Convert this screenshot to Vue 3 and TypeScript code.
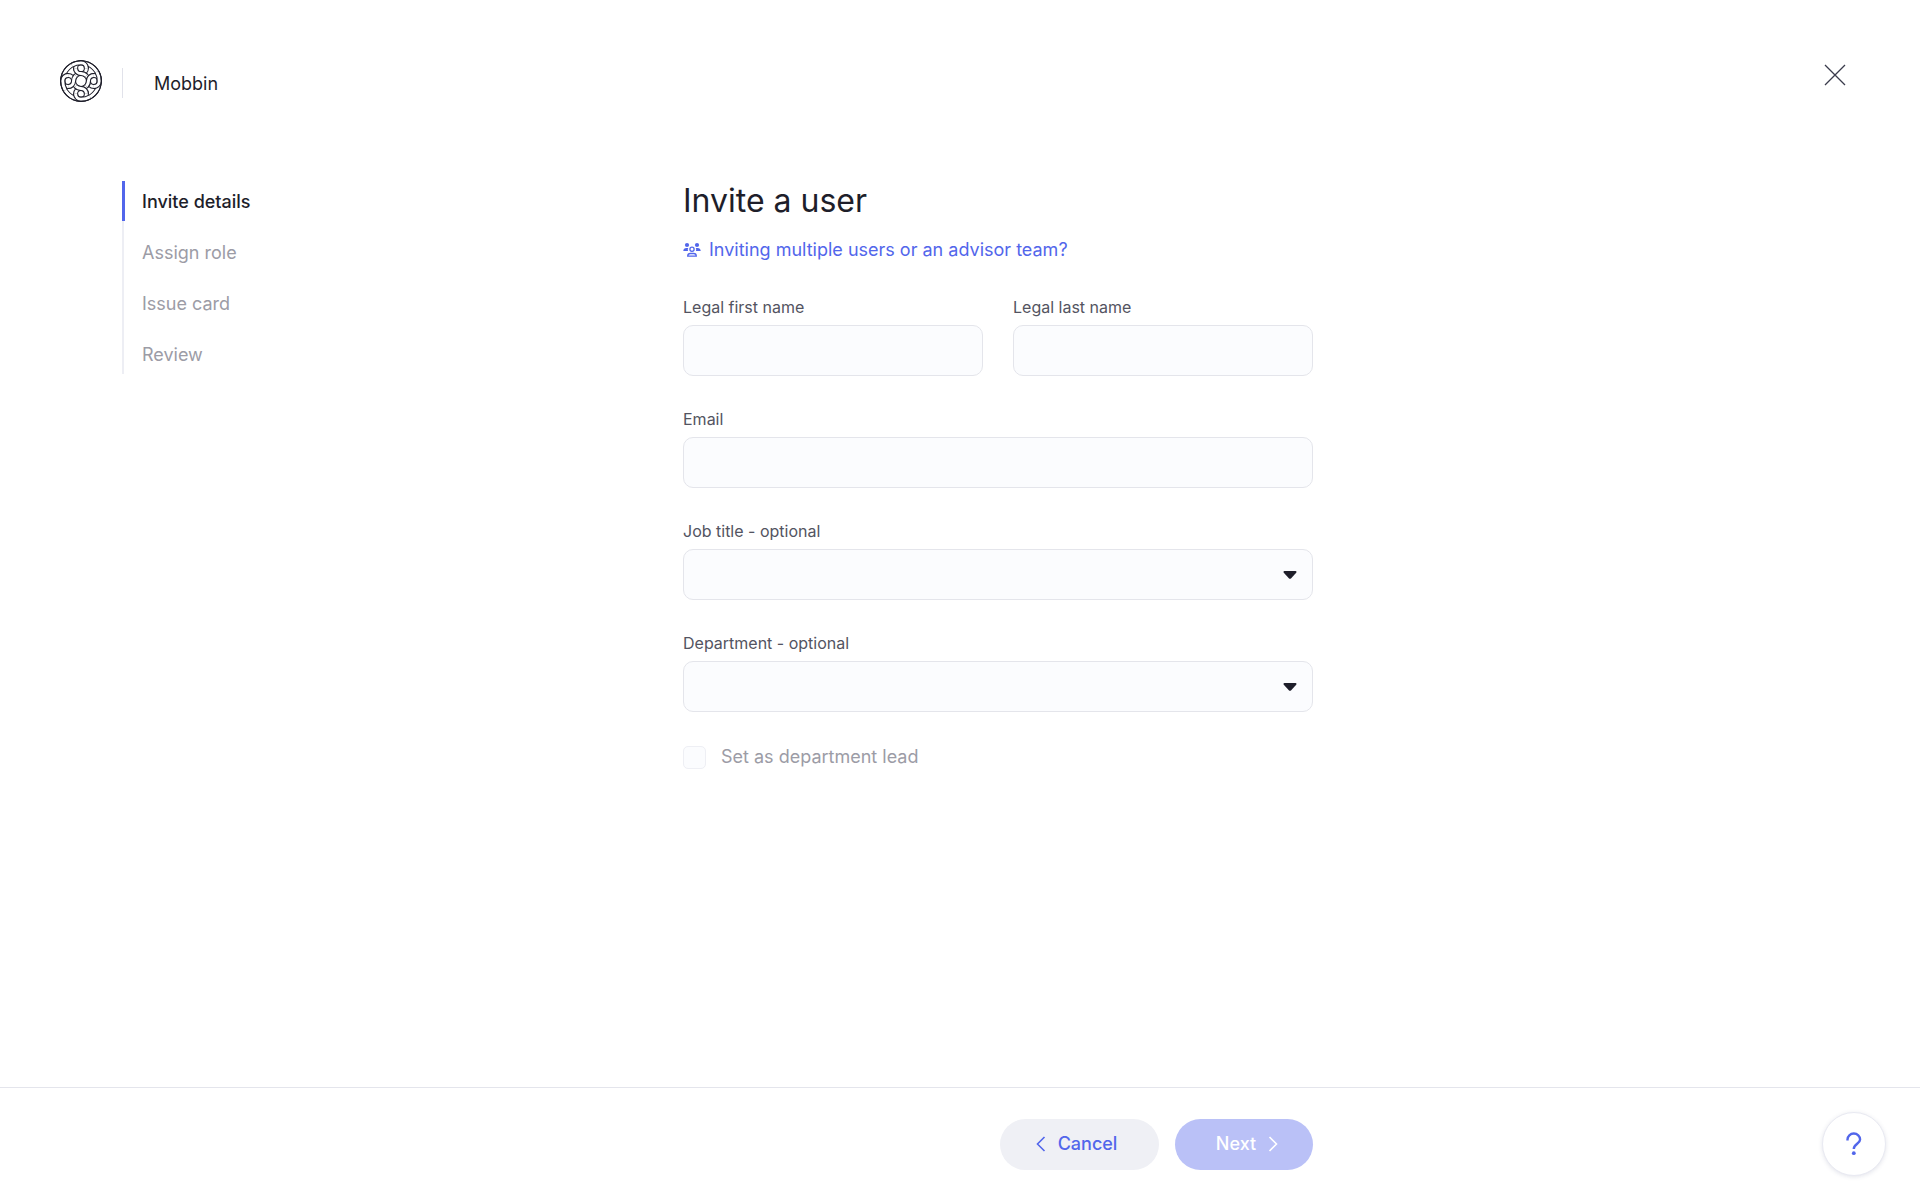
<script setup lang="ts">
import { ref } from 'vue'

const steps: string[] = ['Invite details', 'Assign role', 'Issue card', 'Review']
const current = ref(0)
const quarters: number[] = [0, 90, 180, 270]

const firstName = ref('')
const lastName = ref('')
const email = ref('')
const jobTitle = ref('')
const department = ref('')
const lead = ref(false)
</script>

<template>
  <div class="page">
    <header class="top">
      <div class="brand">
        <svg class="logo" viewBox="-62 -62 124 124" aria-hidden="true">
          <g v-for="q in quarters" :key="'s' + q" :transform="`rotate(${q})`">
            <path class="edge" d="M-54 0A54 54 0 0 1 0 -54A16 16 0 0 1 0 -22A22 22 0 0 0 -22 0A16 16 0 0 1 -54 0Z" />
            <path class="band" d="M-54 0A54 54 0 0 1 0 -54A16 16 0 0 1 0 -22A22 22 0 0 0 -22 0A16 16 0 0 1 -54 0Z" />
          </g>
          <g v-for="q in quarters" :key="'o' + q" :transform="`rotate(${q})`">
            <path class="edge" d="M-27 -46.800A54 54 0 0 1 0 -54A16 16 0 0 1 16 -38" />
            <path class="band" d="M-27 -46.800A54 54 0 0 1 0 -54A16 16 0 0 1 16 -38" />
            <path class="edge" d="M-16 -38A16 16 0 0 0 0 -22A22 22 0 0 1 15.600 -15.600" />
            <path class="band" d="M-16 -38A16 16 0 0 0 0 -22A22 22 0 0 1 15.600 -15.600" />
          </g>
          <circle class="rim" r="60" />
        </svg>
        <span class="company">Mobbin</span>
      </div>
      <button class="close" type="button" aria-label="Close">
        <svg viewBox="0 0 22 22" width="22" height="22" aria-hidden="true">
          <path d="M1 1L21 21M21 1L1 21" fill="none" stroke="#3a3b4c" stroke-width="1.3" />
        </svg>
      </button>
    </header>

    <div class="content">
      <nav class="rail" aria-label="Progress">
        <ol class="steps">
          <li v-for="(step, i) in steps" :key="step" :class="['step', { active: i === current }]">{{ step }}</li>
        </ol>
      </nav>

      <form id="invite" class="form" @submit.prevent>
        <h1 class="title">Invite a user</h1>
        <a class="multi" href="#">
          <svg viewBox="0 0 18 16" width="18" height="16" aria-hidden="true">
            <g fill="currentColor">
              <circle cx="4" cy="3" r="2.1" />
              <circle cx="14" cy="3" r="2.1" />
              <path d="M.3 9C.3 7.100 1.600 6 3.300 6H5.200C4.700 7 4.700 8 5 9Z" />
              <path d="M17.700 9C17.700 7.100 16.400 6 14.700 6H12.800C13.300 7 13.300 8 13 9Z" />
            </g>
            <g fill="none" stroke="currentColor" stroke-width="1.3">
              <circle cx="9" cy="7.300" r="2.100" />
              <path d="M4.700 14.200C4.700 12.400 5.800 11.500 7.300 11.500H10.700C12.200 11.500 13.300 12.400 13.300 14.200Z" />
            </g>
          </svg>
          <span>Inviting multiple users or an advisor team?</span>
        </a>

        <div class="pair">
          <div class="field">
            <label for="first">Legal first name</label>
            <input id="first" v-model="firstName" class="box" type="text" />
          </div>
          <div class="field">
            <label for="last">Legal last name</label>
            <input id="last" v-model="lastName" class="box" type="text" />
          </div>
        </div>
        <div class="field">
          <label for="email">Email</label>
          <input id="email" v-model="email" class="box" type="email" />
        </div>
        <div class="field">
          <label for="job">Job title - optional</label>
          <div class="picker">
            <select id="job" v-model="jobTitle" class="box"><option value=""></option></select>
            <svg class="caret" viewBox="0 0 14 8" width="14" height="8" aria-hidden="true">
              <path d="M1.500 0H12.500Q14 .3 13.200 1.700L8.200 7.200Q7 8.300 5.800 7.200L.8 1.700Q0 .3 1.500 0Z" />
            </svg>
          </div>
        </div>
        <div class="field">
          <label for="dept">Department - optional</label>
          <div class="picker">
            <select id="dept" v-model="department" class="box"><option value=""></option></select>
            <svg class="caret" viewBox="0 0 14 8" width="14" height="8" aria-hidden="true">
              <path d="M1.500 0H12.500Q14 .3 13.200 1.700L8.200 7.200Q7 8.300 5.800 7.200L.8 1.700Q0 .3 1.500 0Z" />
            </svg>
          </div>
        </div>
        <div class="check">
          <input id="lead" v-model="lead" type="checkbox" disabled />
          <label for="lead">Set as department lead</label>
        </div>
      </form>
    </div>

    <footer class="bottom">
      <div class="actions">
        <button class="btn cancel" type="button">
          <svg viewBox="0 0 10 16" width="10" height="16" aria-hidden="true"><path d="M8.500 1L1.500 8L8.500 15" /></svg>
          Cancel
        </button>
        <button class="btn next" type="submit" form="invite" disabled>
          Next
          <svg viewBox="0 0 10 16" width="10" height="16" aria-hidden="true"><path d="M1.500 1L8.500 8L1.500 15" /></svg>
        </button>
      </div>
      <button class="help" type="button" aria-label="Help">
        <svg viewBox="0 0 16 24" width="16" height="24" aria-hidden="true">
          <path d="M1.500 8.500V7.500A6.300 6 0 0 1 14.100 7.500C14.100 11.700 7.800 12 7.800 17" fill="none" stroke="#5266eb" stroke-width="2.400" />
          <circle cx="7.800" cy="21.200" r="1.900" fill="#5266eb" />
        </svg>
      </button>
    </footer>
  </div>
</template>

<style>
body {
  margin: 0;
  background: #fff;
}
</style>

<style scoped>
.page {
  display: flex;
  flex-direction: column;
  min-height: 100vh;
  font-family: Inter, "Liberation Sans", sans-serif;
  font-size: 18px;
  line-height: 24px;
  color: #1e1e2a;
}
button,
input,
select {
  font: inherit;
  margin: 0;
  padding: 0;
  box-sizing: border-box;
}
.top {
  display: flex;
  justify-content: space-between;
  align-items: flex-start;
  padding: 60px 74px 0 60px;
}
.brand {
  display: flex;
  align-items: flex-start;
}
.logo {
  width: 42px;
  height: 42px;
}
.edge {
  fill: none;
  stroke: #1e1e2a;
  stroke-width: 15;
}
.band {
  fill: none;
  stroke: #fff;
  stroke-width: 9;
}
.rim {
  fill: none;
  stroke: #1e1e2a;
  stroke-width: 3;
}
.company {
  margin: 8px 0 0 20px;
  padding: 4px 0 2px 31px;
  border-left: 1px solid #e1e2ea;
}
.close {
  display: flex;
  padding: 4px 0;
  border: 0;
  background: none;
}
.content {
  display: flex;
  flex: 1;
  padding: 79px 122px 60px;
}
.rail {
  width: 561px;
  flex-shrink: 0;
}
.steps {
  display: flex;
  flex-direction: column;
  gap: 11px;
  width: 240px;
  margin: 0;
  padding: 0;
  list-style: none;
  box-shadow: inset 2px 0 #edeef4;
}
.step {
  padding: 9px 0 7px 20px;
  color: #9c9ca6;
}
.step.active {
  color: #1e1e2a;
  font-weight: 500;
  box-shadow: inset 3px 0 #5266eb;
}
.form {
  display: flex;
  flex-direction: column;
  flex: 0 1 630px;
  min-width: 0;
}
.title {
  margin: 0;
  font-size: 32px;
  line-height: 40px;
  font-weight: 400;
}
.multi {
  display: flex;
  align-items: center;
  gap: 8px;
  margin: 17px 0 35px;
  color: #5266eb;
  text-decoration: none;
}
.pair {
  display: grid;
  grid-template-columns: 1fr 1fr;
  gap: 30px;
}
.field {
  display: flex;
  flex-direction: column;
  gap: 8px;
  margin-bottom: 33px;
  font-size: 16px;
  line-height: 20px;
}
.field label {
  color: #535461;
}
.box {
  display: block;
  width: 100%;
  height: 51px;
  padding: 0 16px;
  border: 1px solid #e4e5eb;
  border-radius: 10px;
  background: #fbfcfe;
  appearance: none;
}
.picker {
  position: relative;
}
.caret {
  position: absolute;
  right: 16px;
  top: 22px;
  fill: #1e1e2a;
  pointer-events: none;
}
.check {
  display: flex;
  align-items: center;
  gap: 15px;
  color: #9c9ca6;
}
.check input {
  width: 23px;
  height: 23px;
  border: 1px solid #eeeff4;
  border-radius: 5px;
  background: #fbfcfe;
  appearance: none;
}
.bottom {
  display: flex;
  justify-content: space-between;
  align-items: center;
  padding: 24px 34px 24px 683px;
  border-top: 1px solid #e4e5ec;
}
.actions {
  display: flex;
  flex: 0 1 630px;
  justify-content: flex-end;
  gap: 16px;
}
.btn {
  display: flex;
  align-items: center;
  justify-content: center;
  gap: 12px;
  height: 51px;
  border: 0;
  border-radius: 26px;
  font-weight: 500;
}
.btn path {
  fill: none;
  stroke: currentColor;
  stroke-width: 1.600;
}
.cancel {
  width: 159px;
  padding-right: 6px;
  background: #eff0f5;
  color: #5266eb;
}
.next {
  width: 138px;
  padding-left: 6px;
  background: #bac1f7;
  color: #fff;
}
.help {
  display: flex;
  align-items: center;
  justify-content: center;
  width: 64px;
  height: 64px;
  border: 1px solid #e9eaf2;
  border-radius: 50%;
  background: #fff;
  box-shadow: 0 1px 4px rgba(80, 85, 130, 0.16);
}
</style>
